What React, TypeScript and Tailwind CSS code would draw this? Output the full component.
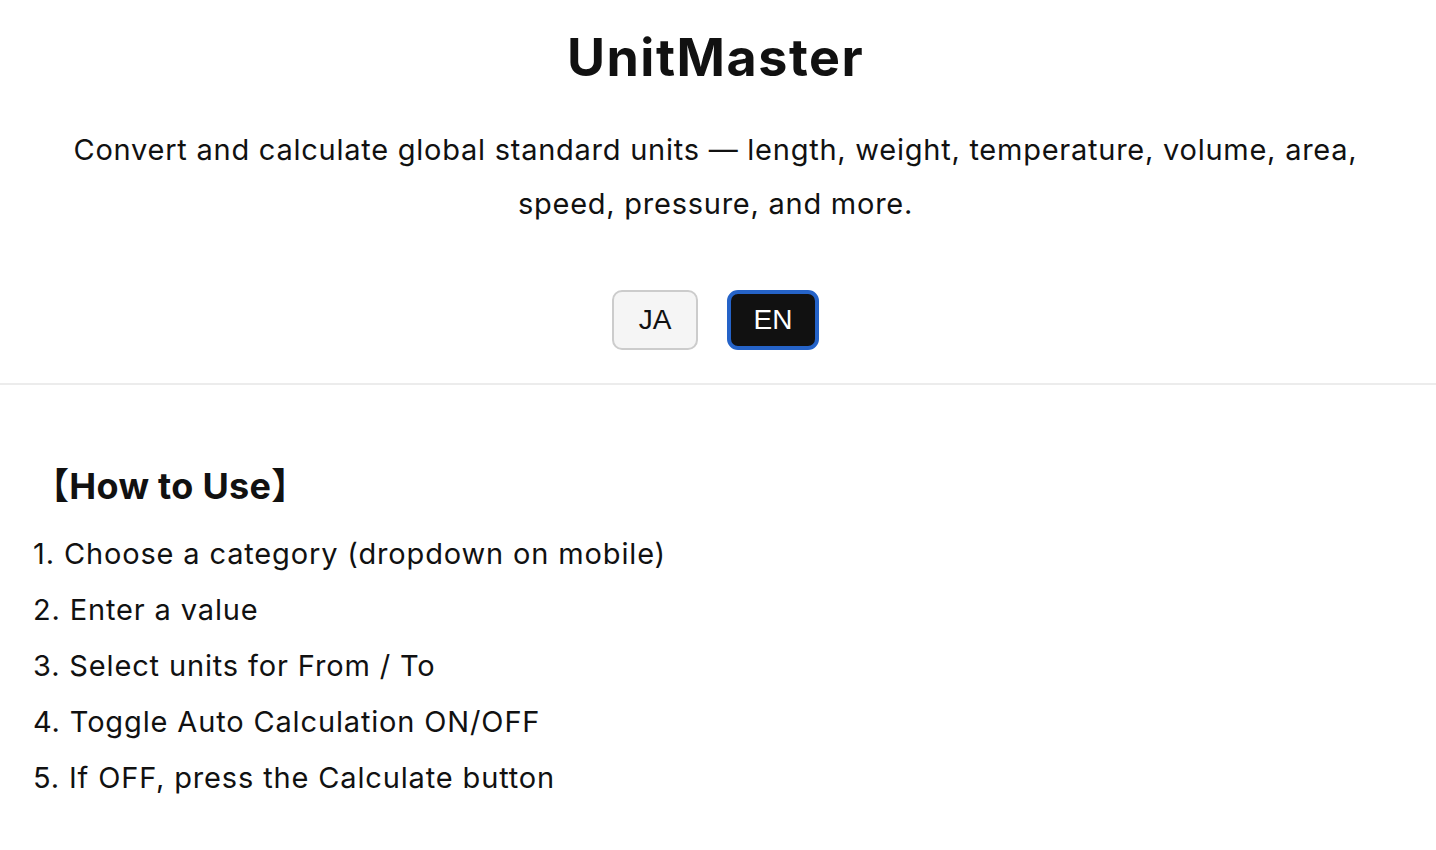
import React from "react";

export default function App() {
  const steps = [
    "Choose a category (dropdown on mobile)",
    "Enter a value",
    "Select units for From / To",
    "Toggle Auto Calculation ON/OFF",
    "If OFF, press the Calculate button",
  ];
  return (
    <div className="min-h-screen bg-white text-[#111111] font-['Inter','Noto_Sans',sans-serif]">
      <header className="text-center pt-[28px] pb-[33px] pr-[5px] border-b-2 border-[#ececec]">
        <h1 className="text-[52px] leading-[60px] font-bold tracking-[1.5px]">UnitMaster</h1>
        <p className="mt-[35px] mx-auto max-w-[1320px] text-[29px] leading-[54px] tracking-[0.75px]">
          Convert and calculate global standard units — length, weight, temperature, volume, area, speed, pressure, and more.
        </p>
        <div className="mt-[59px] flex justify-center gap-[29px] font-['Liberation_Sans',Arial,sans-serif]">
          <button className="w-[86px] h-[60px] rounded-[10px] border-2 border-[#cccccc] bg-[#f5f5f5] text-[28px] text-[#111111]">
            JA
          </button>
          <button className="w-[92px] h-[60px] rounded-[11px] border-[4px] border-[#2563c8] bg-[#111111] text-[28px] text-white">
            EN
          </button>
        </div>
      </header>
      <section className="px-[33px] pt-[79px]">
        <h2 className="text-[36px] leading-[44px] font-bold tracking-[0.3px] font-['Inter','Noto_Sans_CJK_JP',sans-serif]">【How to Use】</h2>
        <ol className="mt-[18px] text-[29px] leading-[56px] tracking-[0.85px]">
          {steps.map((s, i) => (
            <li key={i}>
              {i + 1}. {s}
            </li>
          ))}
        </ol>
      </section>
    </div>
  );
}
